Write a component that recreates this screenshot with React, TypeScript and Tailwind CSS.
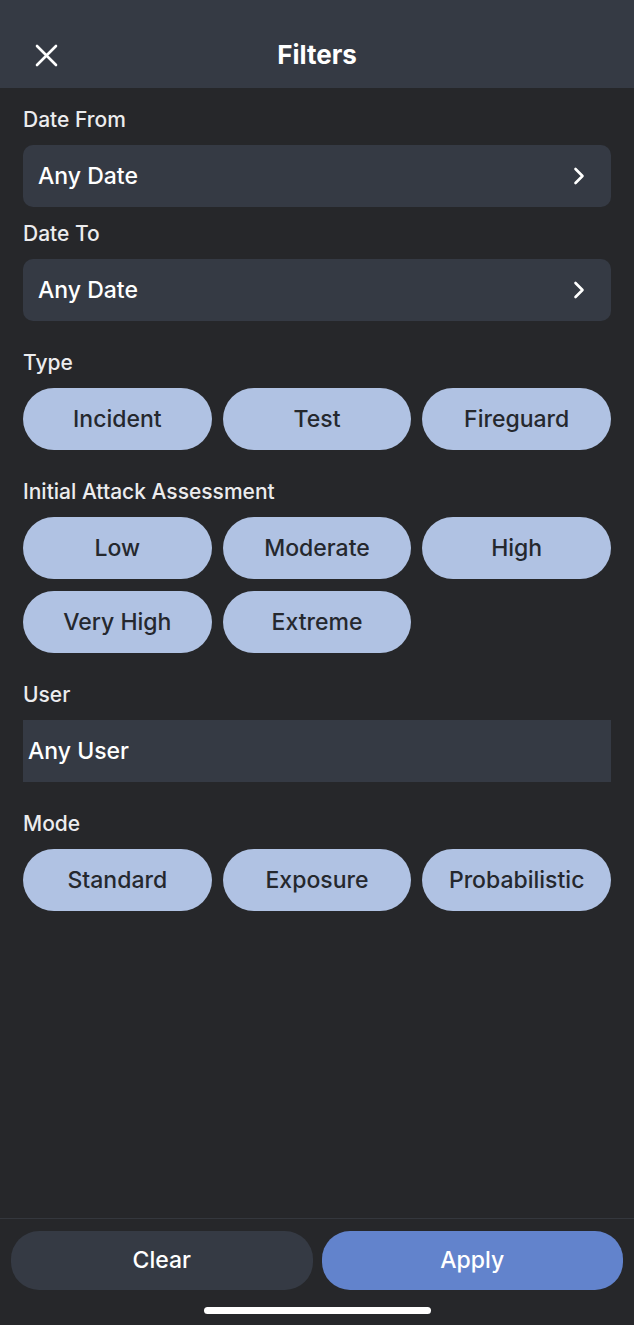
const typeOptions = ['Incident', 'Test', 'Fireguard'];
const assessmentOptions = ['Low', 'Moderate', 'High', 'Very High', 'Extreme'];
const modeOptions = ['Standard', 'Exposure', 'Probabilistic'];

function Label({ children }: { children: string }) {
  return <div className="h-6 leading-6 text-[21px] font-medium text-[#ececee] mb-[13px]">{children}</div>;
}

function DateRow({ value }: { value: string }) {
  return (
    <div className="h-[62px] rounded-[10px] bg-[#353a44] flex items-center justify-between pl-[15px] pr-[26px]">
      <span className="text-[23px] font-medium text-white">{value}</span>
      <svg width="12" height="18" viewBox="0 0 12 18" fill="none" stroke="white" strokeWidth="2.6" strokeLinecap="round" strokeLinejoin="round">
        <path d="M2.5 2 L9.5 9 L2.5 16" />
      </svg>
    </div>
  );
}

function Chips({ options }: { options: string[] }) {
  return (
    <div className="grid grid-cols-3 gap-x-[11px] gap-y-3">
      {options.map((opt) => (
        <button
          key={opt}
          className="h-[62px] rounded-full bg-[#b0c2e3] text-[#25282e] text-[23px] font-medium flex items-center justify-center"
        >
          {opt}
        </button>
      ))}
    </div>
  );
}

export default function App() {
  return (
    <div
      className="w-[634px] h-[1325px] flex flex-col bg-[#26272a] text-white"
      style={{ fontFamily: 'Inter, "Noto Sans", sans-serif' }}
    >
      {/* header */}
      <div className="h-[88px] bg-[#353a44] pt-[40px] px-[35px] relative shrink-0">
        <div className="h-[30px] flex items-center">
          <svg width="23" height="23" viewBox="0 0 23 23" fill="none" stroke="white" strokeWidth="2.6" strokeLinecap="round">
            <path d="M2 2 L21 21 M21 2 L2 21" />
          </svg>
        </div>
        <div className="absolute left-0 right-0 top-[40px] h-[30px] leading-[30px] text-center text-[26px] font-bold pointer-events-none">
          Filters
        </div>
      </div>

      {/* body */}
      <div className="flex-1 px-[23px] pt-[20px]">
        <Label>Date From</Label>
        <DateRow value="Any Date" />
        <div className="mt-[15px]">
          <Label>Date To</Label>
          <DateRow value="Any Date" />
        </div>

        <div className="mt-[30px]">
          <Label>Type</Label>
          <Chips options={typeOptions} />
        </div>

        <div className="mt-[30px]">
          <Label>Initial Attack Assessment</Label>
          <Chips options={assessmentOptions} />
        </div>

        <div className="mt-[30px]">
          <Label>User</Label>
          <div className="h-[62px] bg-[#353a44] flex items-center px-[5px]">
            <span className="text-[23px] font-medium text-white">Any User</span>
          </div>
        </div>

        <div className="mt-[30px]">
          <Label>Mode</Label>
          <Chips options={modeOptions} />
        </div>
      </div>

      {/* footer */}
      <div className="border-t border-[#34373d] shrink-0">
        <div className="flex gap-[9px] px-[11px] pt-[12px]">
          <button className="flex-1 h-[59px] rounded-[28px] bg-[#353a44] text-white text-[23px] font-medium">
            Clear
          </button>
          <button className="flex-1 h-[59px] rounded-[28px] bg-[#6283cc] text-white text-[23px] font-medium">
            Apply
          </button>
        </div>
        <div className="flex justify-center pt-[17px] pb-[11px]">
          <div className="w-[227px] h-[7px] rounded-full bg-white" />
        </div>
      </div>
    </div>
  );
}
